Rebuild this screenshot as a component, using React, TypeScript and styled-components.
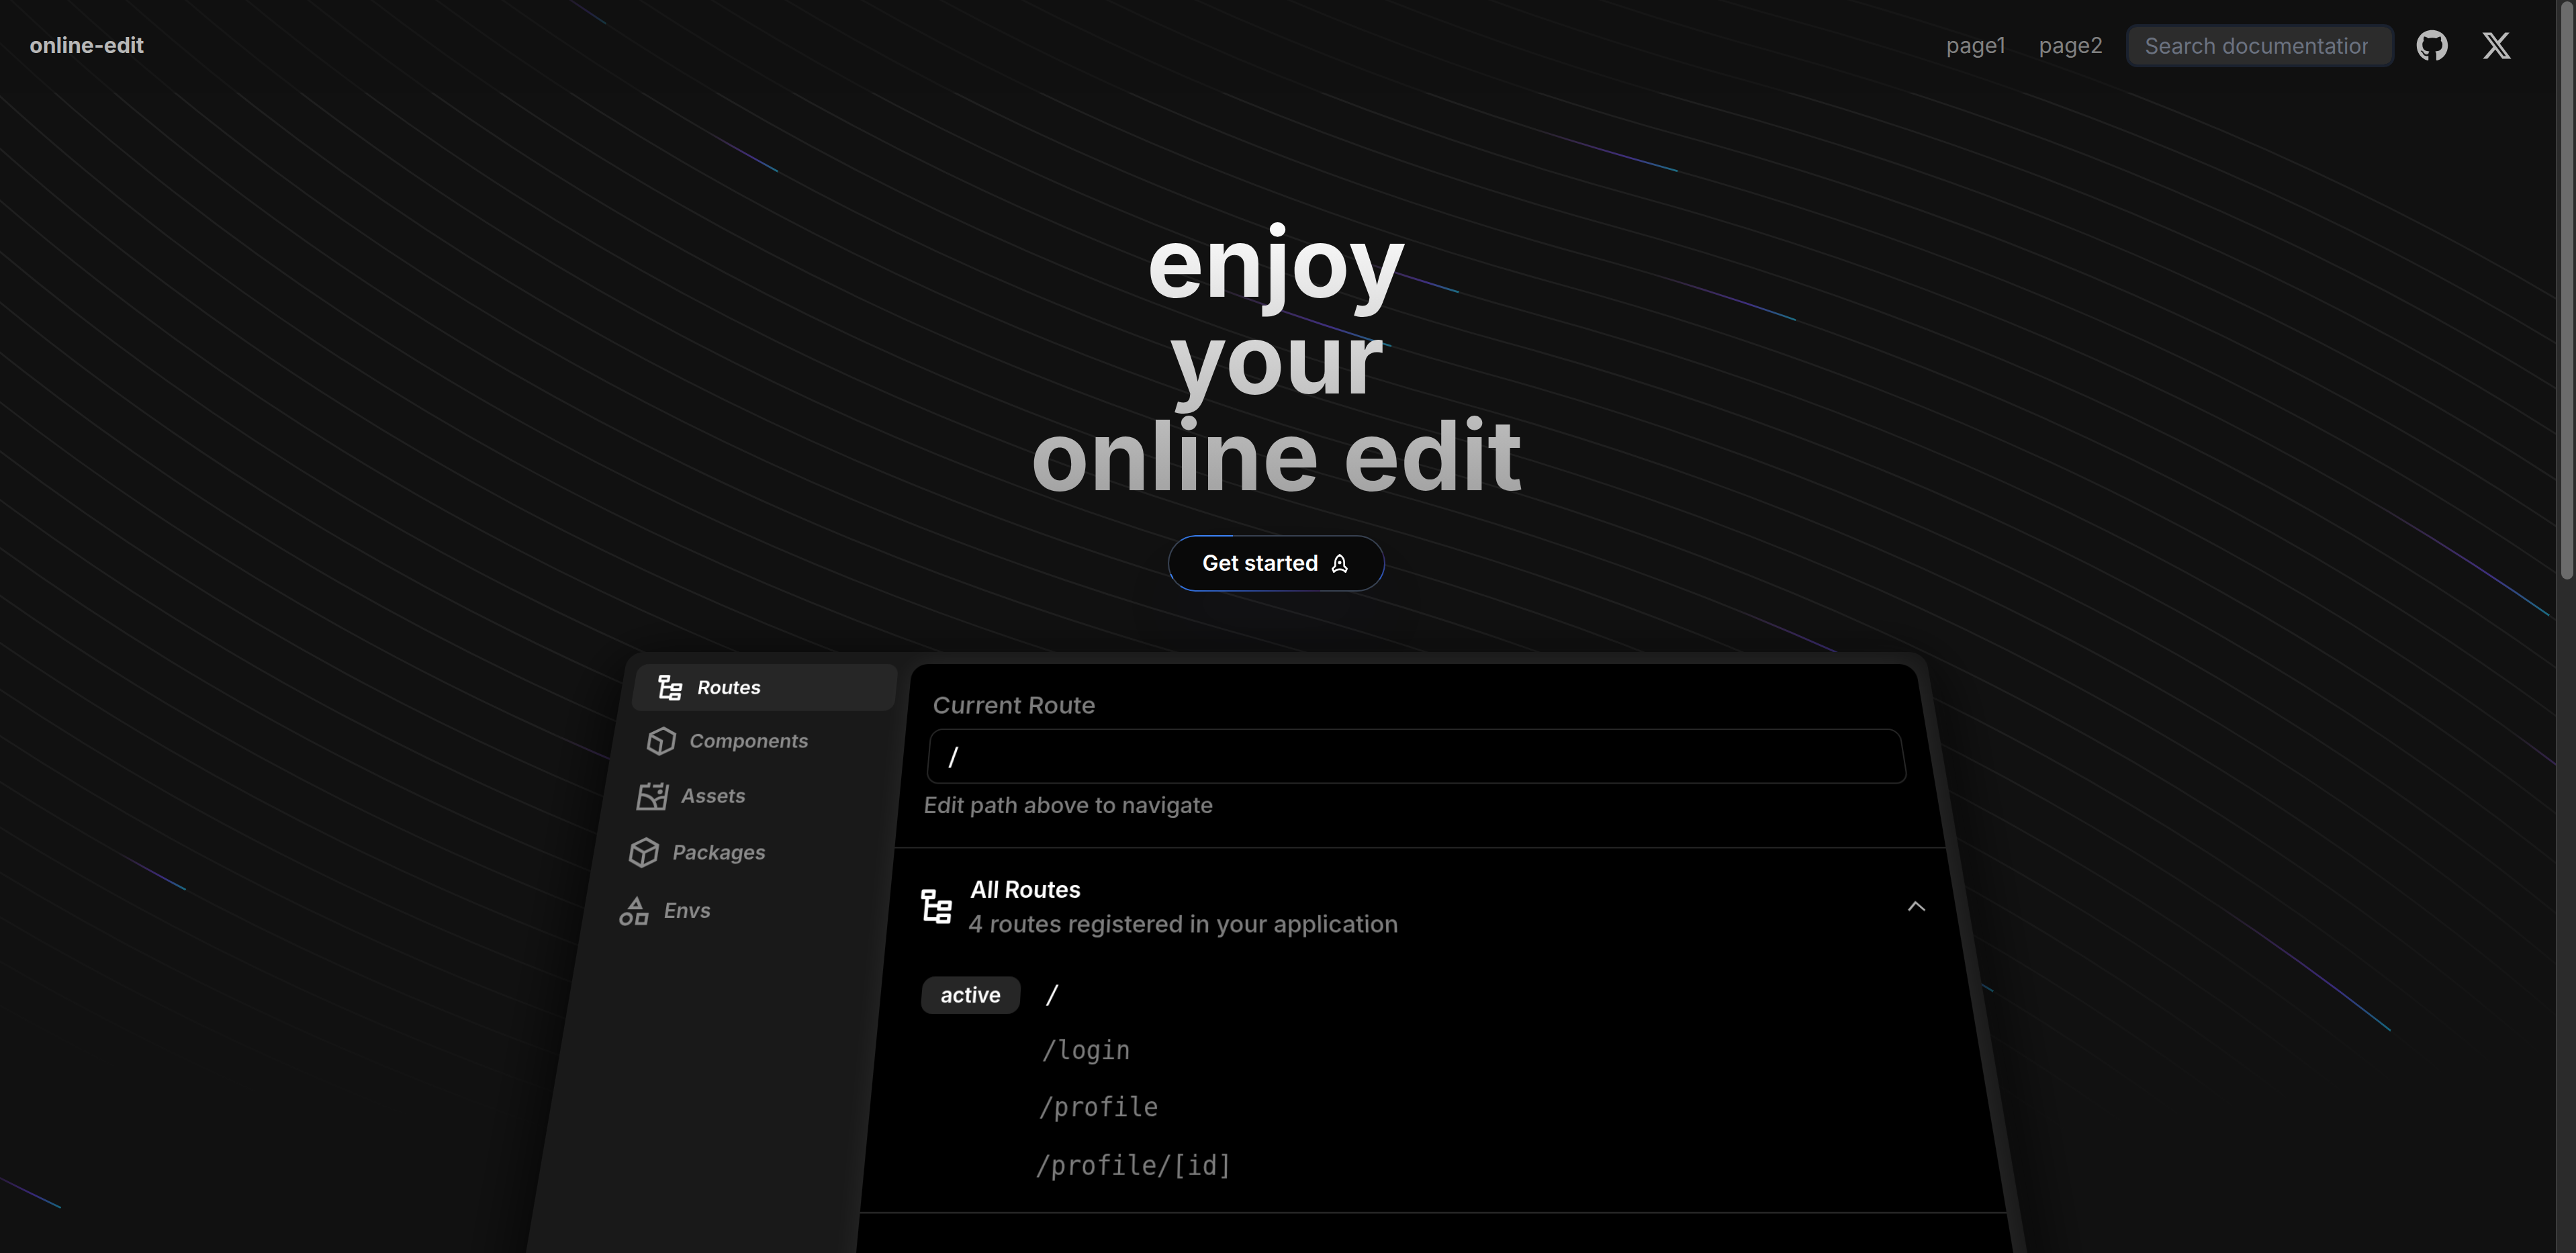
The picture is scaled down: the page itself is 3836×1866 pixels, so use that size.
import React from "react";
import styled, { createGlobalStyle } from "styled-components";
import { FaGithub, FaXTwitter } from "react-icons/fa6";

const GlobalStyle = createGlobalStyle`
  *, *::before, *::after { box-sizing: border-box; }
  html, body, #root { height: 100%; }
  body {
    margin: 0;
    background: #111111;
    color: #ffffff;
    font-family: Inter, "Liberation Sans", sans-serif;
    -webkit-font-smoothing: antialiased;
  }
  button, input { font: inherit; color: inherit; }
`;

/* ---------- shell ---------- */

const Shell = styled.div`
  display: flex;
  height: 100vh;
  overflow: hidden;
`;

const Page = styled.div`
  position: relative;
  flex: 1;
  min-width: 0;
  overflow: hidden;
  isolation: isolate;
`;

const ScrollTrack = styled.div`
  width: 30px;
  padding: 2px 4px 0 6px;
  background: #2b2b2b;
  border-left: 2px solid #3c3c3c;
`;

const ScrollThumb = styled.div`
  height: 46.2%;
  border-radius: 10px;
  background: #6b6b6b;
`;

/* ---------- header ---------- */

const Header = styled.header`
  position: relative;
  z-index: 2;
  display: flex;
  align-items: center;
  justify-content: space-between;
  height: 138px;
  padding: 0 64px 2px 44px;
  background: rgba(17, 17, 17, 0.6);
`;

const Brand = styled.a`
  font-size: 32px;
  font-weight: 700;
  line-height: 40px;
  color: #b8b8b8;
  text-decoration: none;
`;

const Nav = styled.nav`
  display: flex;
  align-items: center;
`;

const NavLink = styled.a`
  margin-right: 50px;
  font-size: 32px;
  line-height: 40px;
  color: #808080;
  text-decoration: none;

  & + & { margin-right: 34px; }
`;

const Search = styled.input`
  width: 400px;
  height: 64px;
  padding: 0 36px 0 24px;
  border: 4px solid #1a212e;
  border-radius: 16px;
  background: #2c2c2c;
  background-clip: padding-box;
  font-size: 32px;
  outline: none;

  &::placeholder { color: #6b7280; opacity: 1; }
`;

const SocialLink = styled.a`
  display: flex;
  margin-left: 32px;
  color: #b8b8b8;

  & + & { margin-left: 48px; }
`;

/* ---------- hero ---------- */

const Hero = styled.section`
  position: relative;
  z-index: 1;
  display: flex;
  flex-direction: column;
  align-items: center;
  padding: 180px 4px 0 0;
`;

const Title = styled.h1`
  margin: 0;
  font-size: 144px;
  font-weight: 700;
  line-height: 144px;
  text-align: center;
  color: transparent;
  background: linear-gradient(180deg, #ffffff, #a0a0a0);
  background-clip: text;
  -webkit-background-clip: text;
`;

const Start = styled.button`
  display: flex;
  align-items: center;
  gap: 16px;
  height: 84px;
  margin-top: 47px;
  padding: 0 50px;
  border: 2px solid transparent;
  border-radius: 42px;
  background:
    linear-gradient(#090909, #090909) padding-box,
    linear-gradient(90deg, #2f6fd6, #3b82f6 40%) 19px 0 / 78px 9px no-repeat border-box,
    linear-gradient(90deg, #3272e0, #2c4a9c 50%, #33214f) 19px 100% / 208px 9px no-repeat border-box,
    linear-gradient(180deg, #33214f, #2f5fc8) 100% 60% / 10px 40px no-repeat border-box,
    linear-gradient(#3b82f6, #3b82f6) 0 75% / 8px 7px no-repeat border-box,
    linear-gradient(#374151, #374151) border-box;
  box-shadow: 0 60px 100px rgba(30, 40, 110, 0.06);
  font-size: 32px;
  font-weight: 600;
  line-height: 40px;
`;

/* ---------- editor preview ---------- */

const Stage = styled.div`
  width: 1932px;
  max-width: 100%;
  margin-top: 90px;
  perspective: 2072px;
  perspective-origin: 50% 0;
`;

const Panel = styled.div`
  display: flex;
  gap: 20px;
  height: 1200px;
  padding: 19px 18px;
  border-radius: 24px;
  background: #191919;
  box-shadow: 0 20px 90px 10px rgba(0, 0, 0, 0.75);
  transform: rotateX(20deg);
  transform-origin: 50% 0;
`;

const Sidebar = styled.nav`
  display: flex;
  flex-direction: column;
  gap: 9px;
  width: 387px;
`;

const SideItem = styled.button<{ $active?: boolean }>`
  display: flex;
  align-items: center;
  gap: 16px;
  height: 73px;
  padding: 0 28px;
  border: 0;
  border-radius: 16px;
  background: ${(p) => (p.$active ? "#262626" : "transparent")};
  color: ${(p) => (p.$active ? "#ffffff" : "#8a8a8a")};
  font-size: 28px;
  font-weight: 600;
  line-height: 40px;
`;

const Content = styled.main`
  flex: 1;
  min-width: 0;
  border-radius: 24px;
  background: #000000;
  box-shadow: 0 0 40px rgba(255, 255, 255, 0.07);
`;

const RouteForm = styled.div`
  display: flex;
  flex-direction: column;
  height: 277px;
  padding: 40px 38px 0 36px;
  border-bottom: 2px solid #262626;
  color: #7c7c7c;
  font-weight: 500;
`;

const Label = styled.label`
  font-size: 36px;
  line-height: 48px;
`;

const RouteInput = styled.input`
  height: 83px;
  margin: 12px 0 8px;
  padding: 0 28px;
  border: 2px solid #262626;
  border-radius: 18px;
  background: transparent;
  color: #ffffff;
  font-size: 36px;
  outline: none;
`;

const Hint = styled.p`
  margin: 0;
  font-size: 32px;
  line-height: 48px;
`;

const Routes = styled.section`
  height: 480px;
  padding: 36px 38px 0 36px;
  border-bottom: 2px solid #262626;
`;

const RoutesHead = styled.div`
  display: flex;
  align-items: center;
  gap: 16px;
  height: 92px;
`;

const RoutesText = styled.div`
  flex: 1;
`;

const RoutesTitle = styled.h2`
  margin: 0;
  font-size: 32px;
  font-weight: 600;
  line-height: 48px;
`;

const RoutesSub = styled.p`
  margin: 0;
  font-size: 33px;
  font-weight: 500;
  line-height: 46px;
  color: #7c7c7c;
`;

const Toggle = styled.button`
  display: flex;
  padding: 0;
  border: 0;
  background: none;
  color: #b0b0b0;
`;

const RouteList = styled.ul`
  margin: 38px 0 0;
  padding: 0 0 0 20px;
  list-style: none;
`;

const RouteRow = styled.li<{ $active?: boolean }>`
  display: grid;
  grid-template-columns: 135px 1fr;
  align-items: center;
  column-gap: 34px;
  height: 73px;
  color: ${(p) => (p.$active ? "#ffffff" : "#7c7c7c")};
`;

const Badge = styled.span`
  border-radius: 16px;
  background: #262626;
  font-size: 28px;
  font-weight: 600;
  line-height: 50px;
  text-align: center;
`;

const RoutePath = styled.code`
  grid-column: 2;
  font-family: "DejaVu Sans Mono", monospace;
  font-size: 33px;
`;

/* ---------- background beams ---------- */

const BeamLayer = styled.svg`
  position: absolute;
  top: 0;
  left: 0;
  z-index: 0;
  width: 100%;
  height: 2237px;
  fill: none;
  pointer-events: none;
`;

const LINE_COUNT = 50;
const SEGMENTS = [
  [[-380, -189], [-380, -189], [-312, 216], [152, 343]],
  [[152, 343], [616, 470], [684, 875], [684, 875]],
];

const linePath = (i: number) => {
  const p = (x: number, y: number) => `${x + 7 * i} ${y - 8 * i}`;
  return `M${p(-380, -189)}C${p(-380, -189)} ${p(-312, 216)} ${p(152, 343)}C${p(616, 470)} ${p(684, 875)} ${p(684, 875)}`;
};

const SAMPLES: number[][] = SEGMENTS.flatMap((s) =>
  Array.from({ length: 200 }, (_, k) => {
    const t = k / 200;
    const u = 1 - t;
    const w = [u * u * u, 3 * u * u * t, 3 * u * t * t, t * t * t];
    return [0, 1].map((a) => s.reduce((sum, pt, n) => sum + pt[a] * w[n], 0));
  })
);

/* Each beam runs along whichever line passes closest to its head. */
const nearestLine = (x: number, y: number) => {
  let best = 0;
  let bestDistance = Infinity;
  for (let i = 0; i < LINE_COUNT; i++) {
    for (const [sx, sy] of SAMPLES) {
      const d = Math.hypot(sx + 7 * i - x, sy - 8 * i - y);
      if (d < bestDistance) {
        bestDistance = d;
        best = i;
      }
    }
  }
  return best;
};

/* head x, head y, tail x, tail y in viewBox units */
const BEAMS = [
  [165, -40, 151, -50],
  [211.8, 0.2, 193, -11],
  [457, -0.5, 418, -12],
  [489, 40.6, 450, 28],
  [397.4, 32.7, 371, 24],
  [379, 47.4, 330, 30],
  [694.4, 120.7, 644, 93],
  [650.9, 234.3, 603, 201],
  [50.5, 195.9, 32, 186],
  [16.5, 282.6, -6, 273],
  [512, 136, 472, 120],
  [542.8, 223.5, 520, 210],
  [190, 171, 152, 154],
  [720, 175, 684, 153],
];

const lines = Array.from({ length: LINE_COUNT }, (_, i) => linePath(i));

const BackgroundBeams = () => (
  <BeamLayer viewBox="0 0 696 316" aria-hidden="true">
    <defs>
      <radialGradient
        id="line-fade"
        cx="0"
        cy="0"
        r="1"
        gradientUnits="userSpaceOnUse"
        gradientTransform="translate(352 34) rotate(90) scale(555 1560.62)"
      >
        <stop offset="0.0666667" stopColor="#d4d4d4" />
        <stop offset="0.243243" stopColor="#d4d4d4" />
        <stop offset="0.43594" stopColor="#ffffff" stopOpacity="0" />
      </radialGradient>
      {BEAMS.map(([x1, y1, x2, y2], k) => (
        <linearGradient key={k} id={`beam-${k}`} gradientUnits="userSpaceOnUse" x1={x1} y1={y1} x2={x2} y2={y2}>
          <stop offset="0" stopColor="#18CCFC" stopOpacity="0" />
          <stop offset="0" stopColor="#18CCFC" />
          <stop offset="0.325" stopColor="#6344F5" />
          <stop offset="1" stopColor="#AE48FF" stopOpacity="0" />
        </linearGradient>
      ))}
    </defs>
    <path d={lines.join("")} stroke="url(#line-fade)" strokeOpacity="0.07" strokeWidth="0.5" />
    {BEAMS.map(([x, y], k) => (
      <path key={k} d={lines[nearestLine(x, y)]} stroke={`url(#beam-${k})`} strokeOpacity="0.45" strokeWidth="0.5" />
    ))}
  </BeamLayer>
);

/* ---------- icons ---------- */

const Icon = styled.svg`
  flex: none;
  fill: none;
  stroke: currentColor;
  stroke-width: 2;
`;

const RocketIcon = () => (
  <Icon width="32" height="32" viewBox="0 0 24 24" strokeLinejoin="round">
    <path d="M12 2.500C9 4.500 7 8 7 11V15L4 18L5.500 21.500L8 19.500C10.500 18.500 13.500 18.500 16 19.500L18.500 21.500L20 18L17 15V11C17 8 15 4.500 12 2.500Z" />
    <circle cx="12" cy="11" r="0.900" fill="currentColor" />
  </Icon>
);

const TreeIcon = ({ size = 50 }: { size?: number }) => (
  <Icon width={size} height={size} viewBox="0 0 24 24" strokeLinejoin="round">
    <path d="M4 3.500H10V7H4ZM13.500 9.700H19.500V13.500H13.500ZM13.500 17H19.500V20.500H13.500ZM6.500 7V19H13.500M6.500 11.600H13.500" />
  </Icon>
);

const CubeIcon = () => (
  <Icon width="50" height="50" viewBox="0 0 24 24">
    <path d="M12 2.500L20.500 7V17L12 21.500L3.500 17V7ZM3.500 7.500L12 12V21" />
  </Icon>
);

const AssetsIcon = () => (
  <Icon width="50" height="50" viewBox="0 0 24 24">
    <path d="M8 2.500V5H3V21H21V4M11 5H17V2.500M3 11C10 11 14 15 15.500 21M14 15C15.500 13.500 18 12.500 21 13" />
    <circle cx="16.500" cy="9" r="0.700" fill="currentColor" />
  </Icon>
);

const BoxIcon = () => (
  <Icon width="50" height="50" viewBox="0 0 24 24">
    <path d="M12 2.500L20.500 7V17L12 21.500L3.500 17V7ZM3.500 7.500L12 12L20.500 7.500M12 12V21" />
  </Icon>
);

const ShapesIcon = () => (
  <Icon width="50" height="50" viewBox="0 0 24 24">
    <path d="M12 4L15.500 10H8.500ZM14.500 14.500H20.500V20.500H14.500Z" />
    <circle cx="7" cy="17.500" r="3.500" />
  </Icon>
);

const ChevronUpIcon = () => (
  <Icon width="34" height="34" viewBox="0 0 24 24">
    <path d="M4 16L12 8L20 16" />
  </Icon>
);

const SIDE_ITEMS = [
  { label: "Routes", icon: <TreeIcon /> },
  { label: "Components", icon: <CubeIcon /> },
  { label: "Assets", icon: <AssetsIcon /> },
  { label: "Packages", icon: <BoxIcon /> },
  { label: "Envs", icon: <ShapesIcon /> },
];

const ROUTES = ["/", "/login", "/profile", "/profile/[id]"];

export default function App() {
  return (
    <Shell>
      <GlobalStyle />
      <Page>
        <BackgroundBeams />
        <Header>
          <Brand href="#">online-edit</Brand>
          <Nav>
            <NavLink href="#page1">page1</NavLink>
            <NavLink href="#page2">page2</NavLink>
            <Search type="text" placeholder="Search documentation..." aria-label="Search documentation" />
            <SocialLink href="#github" aria-label="GitHub">
              <FaGithub size={48} />
            </SocialLink>
            <SocialLink href="#x" aria-label="X">
              <FaXTwitter size={48} />
            </SocialLink>
          </Nav>
        </Header>
        <Hero>
          <Title>
            enjoy
            <br />
            your
            <br />
            online edit
          </Title>
          <Start type="button">
            Get started
            <RocketIcon />
          </Start>
          <Stage>
            <Panel>
              <Sidebar>
                {SIDE_ITEMS.map((item, i) => (
                  <SideItem key={item.label} type="button" $active={i === 0}>
                    {item.icon}
                    {item.label}
                  </SideItem>
                ))}
              </Sidebar>
              <Content>
                <RouteForm>
                  <Label htmlFor="route">Current Route</Label>
                  <RouteInput id="route" defaultValue="/" />
                  <Hint>Edit path above to navigate</Hint>
                </RouteForm>
                <Routes>
                  <RoutesHead>
                    <TreeIcon size={60} />
                    <RoutesText>
                      <RoutesTitle>All Routes</RoutesTitle>
                      <RoutesSub>4 routes registered in your application</RoutesSub>
                    </RoutesText>
                    <Toggle type="button" aria-label="Collapse routes">
                      <ChevronUpIcon />
                    </Toggle>
                  </RoutesHead>
                  <RouteList>
                    {ROUTES.map((route, i) => (
                      <RouteRow key={route} $active={i === 0}>
                        {i === 0 && <Badge>active</Badge>}
                        <RoutePath>{route}</RoutePath>
                      </RouteRow>
                    ))}
                  </RouteList>
                </Routes>
              </Content>
            </Panel>
          </Stage>
        </Hero>
      </Page>
      <ScrollTrack>
        <ScrollThumb />
      </ScrollTrack>
    </Shell>
  );
}
